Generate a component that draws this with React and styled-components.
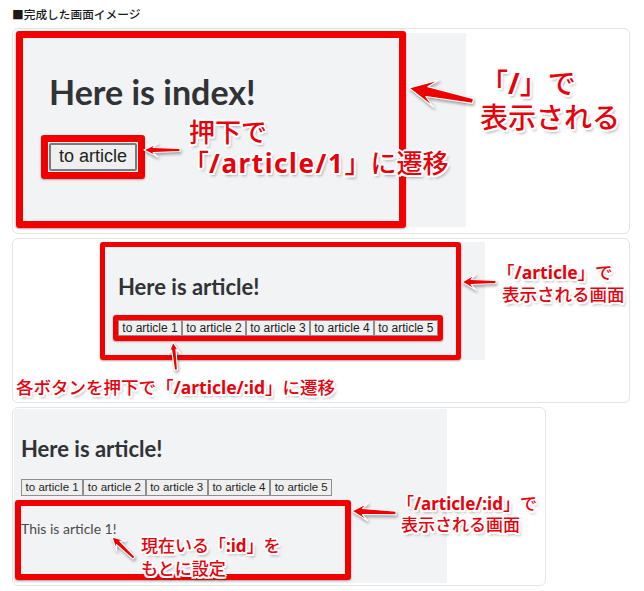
import React from "react";
import styled, { createGlobalStyle } from "styled-components";

const GlobalStyle = createGlobalStyle`
  body {
    margin: 0;
    background: #fff;
    font-family: "Noto Sans", "Noto Sans CJK JP", sans-serif;
  }
`;

// polygon for a callout arrow, tail (x1,y1) -> tip (x2,y2)
const arrowPoints = (x1, y1, x2, y2, head, wing, neck, tail) => {
  const dx = x2 - x1;
  const dy = y2 - y1;
  const len = Math.hypot(dx, dy);
  const ux = dx / len;
  const uy = dy / len;
  const p = (t, s) =>
    `${(x1 + ux * t - uy * s).toFixed(1)},${(y1 + uy * t + ux * s).toFixed(1)}`;
  return [
    p(len, 0),
    p(len - head, wing),
    p(len - head * 0.65, neck),
    p(0, tail),
    p(0, -tail),
    p(len - head * 0.65, -neck),
    p(len - head, -wing),
  ].join(" ");
};

function App() {
  return (
    <Page>
      <GlobalStyle />
      <Title>■完成した画面イメージ</Title>

      <Card $w={618} $h={206}>
        <Screen $w={452} $h={194} $ml={1} $mt={4} $pad="39px 0 0 35px">
          <Heading $size={34}>Here is index!</Heading>
          <Highlight $t={7} $gap={1} $mt={30}>
            <BigButton>to article</BigButton>
          </Highlight>
        </Screen>
        <Frame $left={3} $top={2} $w={390} $h={197} $t={7} />
        <Callout $left={170} $top={88} $size={26} $lh={31}>
          <Line $indent={6}>押下で</Line>
          <Line>
            「<Path $track={1.6}>/article/1</Path>」に遷移
          </Line>
        </Callout>
        <Callout $left={467} $top={37} $size={28} $lh={34}>
          <Line>
            「<Path>/</Path>」で
          </Line>
          <Line>表示される</Line>
        </Callout>
        <Arrows>
          <polygon points={arrowPoints(460, 72, 396, 59, 28, 14, 5, 2.5)} />
          <polygon points={arrowPoints(167, 121, 131, 121, 14, 7, 2.5, 1.5)} />
        </Arrows>
      </Card>

      <Card $w={618} $h={165}>
        <Screen $w={385} $h={118} $ml={87} $mt={3} $pad="32px 0 0 18px">
          <Heading $size={22}>Here is article!</Heading>
          <Highlight $t={5} $gap={0} $mt={20}>
            <ButtonRow>
              {[1, 2, 3, 4, 5].map((n) => (
                <RouteButton key={n} $size={12} $px={3.3} $h={16}>
                  to article {n}
                </RouteButton>
              ))}
            </ButtonRow>
          </Highlight>
        </Screen>
        <Frame $left={87} $top={3} $w={361} $h={118} $t={5} />
        <Callout $left={3} $top={137} $size={17.5} $lh={22}>
          <Line>
            各ボタンを押下で「<Path>/article/:id</Path>」に遷移
          </Line>
        </Callout>
        <Callout $left={489} $top={22} $size={17.5} $lh={22}>
          <Line $indent={-5}>
            「<Path>/article</Path>」で
          </Line>
          <Line>表示される画面</Line>
        </Callout>
        <Arrows>
          <polygon points={arrowPoints(483, 43, 449, 43, 14, 8, 2.5, 1.5)} />
          <polygon points={arrowPoints(163, 131, 160, 103, 12, 6, 2.2, 1.5)} />
        </Arrows>
      </Card>

      <Card $w={534} $h={179}>
        <Screen $w={433} $h={174} $ml={1} $mt={1} $pad="27px 0 0 7px">
          <Heading $size={22}>Here is article!</Heading>
          <ButtonRow $mt={17}>
            {[1, 2, 3, 4, 5].map((n) => (
              <RouteButton key={n} $size={11.5} $px={3.6} $h={17}>
                to article {n}
              </RouteButton>
            ))}
          </ButtonRow>
          <Body>This is article 1!</Body>
        </Screen>
        <Frame $left={2} $top={92} $w={336} $h={80} $t={6} />
        <Callout $left={128} $top={126} $size={17} $lh={23}>
          <Line>
            現在いる「<Path>:id</Path>」を
          </Line>
          <Line>もとに設定</Line>
        </Callout>
        <Callout $left={388} $top={85} $size={17} $lh={21}>
          <Line $indent={-4}>
            「<Path>/article/:id</Path>」で
          </Line>
          <Line>表示される画面</Line>
        </Callout>
        <Arrows>
          <polygon points={arrowPoints(121, 150, 99, 129, 13, 7, 2.5, 1.5)} />
          <polygon points={arrowPoints(383, 105, 339, 103, 16, 9, 3, 1.8)} />
        </Arrows>
      </Card>
    </Page>
  );
}

export default App;

const Page = styled.div`
  display: flex;
  flex-direction: column;
  gap: 4px;
  padding: 5px 14px 0 12px;
`;

const Title = styled.div`
  font-family: "Noto Sans CJK JP", sans-serif;
  font-size: 11.7px;
  font-weight: 500;
  line-height: 18px;
  color: #1a1a1a;
  margin-bottom: 1px;
`;

const Card = styled.div`
  position: relative;
  box-sizing: border-box;
  width: ${(p) => p.$w}px;
  height: ${(p) => p.$h}px;
  border: 1px solid #e4e4e4;
  border-radius: 6px;
  background: #fff;
`;

const Screen = styled.div`
  display: flex;
  flex-direction: column;
  align-items: flex-start;
  box-sizing: border-box;
  width: ${(p) => p.$w}px;
  height: ${(p) => p.$h}px;
  margin: ${(p) => p.$mt}px 0 0 ${(p) => p.$ml}px;
  padding: ${(p) => p.$pad};
  background: #f2f3f5;
`;

const Heading = styled.h1`
  margin: 0;
  font-family: Lato, "Noto Sans", sans-serif;
  font-weight: 700;
  font-size: ${(p) => p.$size}px;
  line-height: 1.2;
  color: #303236;
`;

const Highlight = styled.div`
  display: flex;
  margin: ${(p) => p.$mt - p.$t - p.$gap}px ${(p) => -p.$t - p.$gap}px
    ${(p) => -p.$t - p.$gap}px;
  padding: ${(p) => p.$gap}px;
  border: ${(p) => p.$t}px solid #f20000;
  border-radius: 3px;
  box-shadow: 0 1px 2px rgba(0, 0, 0, 0.3);
`;

const BigButton = styled.button`
  box-sizing: border-box;
  height: 28px;
  padding: 0 8px;
  font-family: "Liberation Sans", Arial, sans-serif;
  font-size: 18px;
  color: #222;
  background: #efefef;
  border: 2px solid #7a7a7a;
  border-radius: 2px;
`;

const ButtonRow = styled.div`
  display: flex;
  margin-top: ${(p) => p.$mt || 0}px;
`;

const RouteButton = styled.button`
  box-sizing: border-box;
  height: ${(p) => p.$h}px;
  padding: 0 ${(p) => p.$px}px;
  font-family: "Liberation Sans", Arial, sans-serif;
  font-size: ${(p) => p.$size}px;
  line-height: 1;
  color: #1e1e1e;
  background: #efefef;
  border: 1px solid #8e8e8e;
  border-radius: 0;
`;

const Body = styled.p`
  margin: 25px 0 0;
  font-family: Lato, "Noto Sans", sans-serif;
  font-size: 14px;
  line-height: 1.2;
  color: #4a4a4a;
`;

const Frame = styled.div`
  position: absolute;
  left: ${(p) => p.$left}px;
  top: ${(p) => p.$top}px;
  width: ${(p) => p.$w}px;
  height: ${(p) => p.$h}px;
  box-sizing: border-box;
  border: ${(p) => p.$t}px solid #f20000;
  border-radius: 3px;
  box-shadow: 0 1px 2px rgba(0, 0, 0, 0.35);
  pointer-events: none;
`;

const Callout = styled.div`
  position: absolute;
  left: ${(p) => p.$left}px;
  top: ${(p) => p.$top}px;
  font-family: "Noto Sans", "Noto Sans CJK JP", sans-serif;
  font-size: ${(p) => p.$size}px;
  line-height: ${(p) => p.$lh}px;
  font-weight: 500;
  color: #e8000b;
  white-space: nowrap;
  text-shadow: -1.5px -1.5px 0 #fff, 1.5px -1.5px 0 #fff, -1.5px 1.5px 0 #fff,
    1.5px 1.5px 0 #fff, 0 2px 0 #fff, 0 -2px 0 #fff, 2px 0 0 #fff,
    -2px 0 0 #fff, 2px 3px 3px rgba(0, 0, 0, 0.35);
`;

const Line = styled.span`
  display: block;
  margin-left: ${(p) => p.$indent || 0}px;
`;

const Path = styled.span`
  font-weight: 700;
  letter-spacing: ${(p) => p.$track || 0}px;
`;

const Arrows = styled.svg`
  position: absolute;
  left: 0;
  top: 0;
  width: 100%;
  height: 100%;
  overflow: visible;
  pointer-events: none;
  fill: #ee0000;
  stroke: #fff;
  stroke-width: 1.2;
  stroke-linejoin: round;
  filter: drop-shadow(1px 2px 1.5px rgba(0, 0, 0, 0.35));
`;
